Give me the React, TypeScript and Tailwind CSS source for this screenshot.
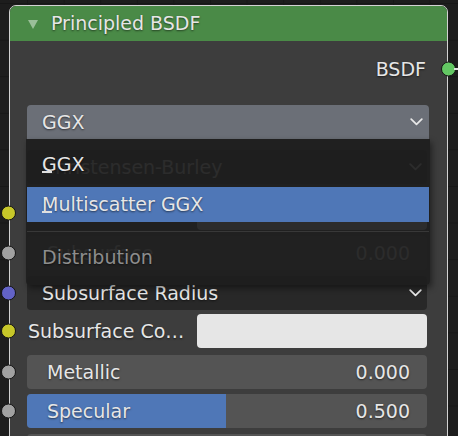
import React from "react";

const base = "font-['DejaVu_Sans','Liberation_Sans',sans-serif] text-[19px] [text-shadow:0_1px_2px_rgba(0,0,0,0.55)] whitespace-nowrap";
const txt = base + " text-[#e6e6e6]";

function Chevron() {
  return (
    <svg width="13" height="8" viewBox="0 0 13 8" className="block">
      <polyline points="1.2,1.2 6.5,6.4 11.8,1.2" fill="none" stroke="#e8e8e8" strokeWidth="1.7" strokeLinecap="round" strokeLinejoin="round" />
    </svg>
  );
}

function Socket({ color }: { color: string }) {
  return (
    <span
      className={
        "absolute left-[-9px] top-1/2 -translate-y-1/2 w-[15px] h-[15px] rounded-full border border-[#151515] " + color
      }
    />
  );
}

function Slider({ label, value, fill }: { label: string; value: string; fill?: boolean }) {
  return (
    <div className="relative ml-[17px] w-[400px] h-[34px] rounded-[4px] bg-[#545454] flex items-center overflow-hidden">
      {fill ? <div className="absolute left-0 top-0 bottom-0 w-[199px] bg-[#4f77b7]" /> : null}
      <span className={txt + " relative pl-[20px]"}>{label}</span>
      <span className={txt + " relative ml-auto pr-[17px]"}>{value}</span>
    </div>
  );
}

function Dropdown({ label, bg, rounded, wide }: { label: string; bg: string; rounded: string; wide?: boolean }) {
  return (
    <div
      className={
        "ml-[17px] h-[34px] flex items-center pl-[15px] " +
        (wide ? "w-[402px] pr-[6px] " : "w-[400px] pr-[5px] ") +
        bg +
        " " +
        rounded
      }
    >
      <span className={txt}>{label}</span>
      <span className="ml-auto">
        <Chevron />
      </span>
    </div>
  );
}

function Mnemonic({ ch }: { ch: string }) {
  return (
    <span className="relative inline-block leading-none">
      {ch}
      <span className="absolute left-0 bottom-[1px] w-[10px] h-[2px] bg-[#e0e0e0]" />
    </span>
  );
}

export default function App() {
  return (
    <div className="w-[458px] h-[436px] overflow-hidden bg-[#1d1d1d] bg-[linear-gradient(to_bottom,#171717_1px,transparent_1px),linear-gradient(to_right,#171717_1px,transparent_1px)] bg-size-[36.6px_36.6px] bg-position-[27px_3px] pt-[5px] pl-[9px]">
      <div className="relative w-[439px] h-[460px] border border-[#d2d2d2] rounded-t-[7px] bg-[#3d3d3d]">
        {/* header */}
        <div className="h-[35px] bg-[#4a8a47] rounded-t-[6px] flex items-center pl-[18px]">
          <svg width="10" height="9" viewBox="0 0 10 9" className="block mt-[2px]">
            <polygon points="0,0 10,0 5,9" fill="rgba(220,235,220,0.55)" />
          </svg>
          <span className={txt + " ml-[13px]"}>Principled BSDF</span>
        </div>

        {/* body */}
        <div className="relative flex flex-col">
          {/* output */}
          <div className="relative h-[56px] flex items-center justify-end pr-[21px]">
            <span className={txt}>BSDF</span>
            <span className="absolute right-[-9px] top-1/2 -translate-y-1/2 w-[15px] h-[15px] rounded-full border border-[#151515] bg-[#63c763]" />
            <span className="absolute left-[444px] top-[27px] w-[12px] h-[2px] bg-[#e0e0e0]" />
          </div>

          <div className="mt-[8px]">
            <Dropdown label="GGX" bg="bg-[#6b6f77]" rounded="rounded-t-[4px]" wide />
          </div>

          <div className="mt-[11px]">
            <Dropdown label="Christensen-Burley" bg="bg-[#282828]" rounded="rounded-[4px]" />
          </div>

          <div className="relative mt-[12px] h-[34px] flex items-center pl-[18px]">
            <Socket color="bg-[#c7c729]" />
            <span className={txt}>Base Color</span>
            <div className="ml-auto mr-[20px] w-[230px] h-[34px] rounded-[4px] bg-[#e6e6e6]" />
          </div>

          <div className="relative mt-[6px]">
            <Socket color="bg-[#a1a1a1]" />
            <Slider label="Subsurface" value="0.000" />
          </div>

          <div className="relative mt-[6px]">
            <Socket color="bg-[#6363c7]" />
            <Dropdown label="Subsurface Radius" bg="bg-[#282828]" rounded="rounded-[4px]" />
          </div>

          <div className="relative mt-[4px] h-[34px] flex items-center pl-[18px]">
            <Socket color="bg-[#c7c729]" />
            <span className={txt}>Subsurface Co…</span>
            <div className="ml-auto mr-[20px] w-[230px] h-[34px] rounded-[4px] bg-[#e6e6e6]" />
          </div>

          <div className="relative mt-[7px]">
            <Socket color="bg-[#a1a1a1]" />
            <Slider label="Metallic" value="0.000" />
          </div>

          <div className="relative mt-[5px]">
            <Socket color="bg-[#a1a1a1]" />
            <Slider label="Specular" value="0.500" fill />
          </div>

          <div className="relative mt-[6px]">
            <Socket color="bg-[#a1a1a1]" />
            <div className="ml-[17px] w-[400px] h-[34px] rounded-[4px] bg-[#545454]" />
          </div>

          {/* open menu */}
          <div className="absolute top-[98px] left-[16px] w-[404px] h-[146px] bg-[rgba(30,30,30,0.935)] rounded-b-[4px] shadow-[2px_3px_6px_rgba(0,0,0,0.45)] flex flex-col px-[1px] pt-[8px]">
            <div className="h-[35px] flex items-center pl-[15px]">
              <span className={txt}>
                <Mnemonic ch="G" />
                GX
              </span>
            </div>
            <div className="mt-[5px] h-[35px] flex items-center pl-[15px] bg-[#4f77b7]">
              <span className={txt}>
                <Mnemonic ch="M" />
                ultiscatter GGX
              </span>
            </div>
            <div className="mt-[9px] h-[1px] bg-[#383838]" />
            <div className="mt-[8px] h-[35px] flex items-center pl-[15px]">
              <span className={base + " text-[#8d8d8d]"}>Distribution</span>
            </div>
          </div>
        </div>
      </div>
    </div>
  );
}
